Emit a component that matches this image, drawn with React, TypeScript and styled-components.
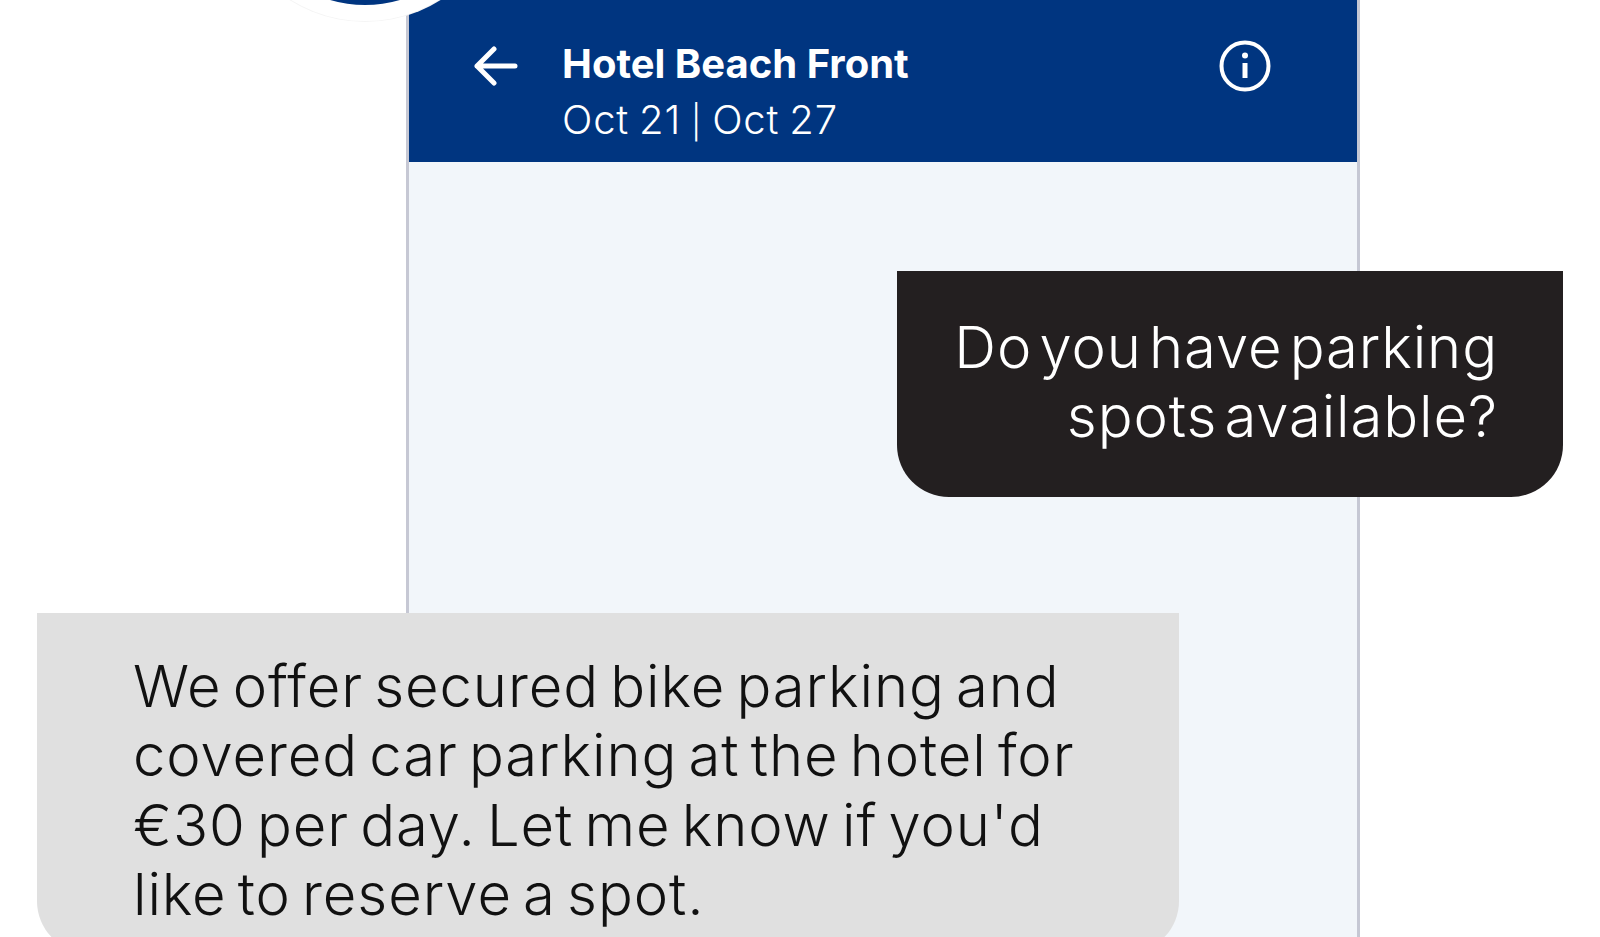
import React from 'react';
import styled, { createGlobalStyle } from 'styled-components';

const GlobalStyle = createGlobalStyle`
  html,
  body {
    margin: 0;
    height: 100%;
    background: #fff;
    overflow: hidden;
  }
`;

const Page = styled.div`
  width: 1600px;
  height: 937px;
  overflow: hidden;
  position: relative;
  padding-left: 406px;
  box-sizing: border-box;
  background: #fff;
  font-family: 'Inter', 'Liberation Sans', sans-serif;
`;

const Phone = styled.div`
  width: 954px;
  height: 937px;
  box-sizing: border-box;
  display: flex;
  flex-direction: column;
  background: #f2f6fa;
  border-left: 3px solid #c6c8d4;
  border-right: 3px solid #c6c8d4;
`;

const Header = styled.header`
  height: 162px;
  box-sizing: border-box;
  flex: none;
  display: flex;
  align-items: flex-start;
  background: #003580;
  color: #fff;
  padding: 43px 86px 0 65px;
`;

const BackButton = styled.div`
  width: 44px;
  height: 44px;
  margin-top: 1px;
  flex: none;
`;

const HeaderText = styled.div`
  flex: 1;
  margin-left: 44px;
  margin-top: -1px;
`;

const Title = styled.div`
  font-size: 40px;
  font-weight: 700;
  line-height: 44px;
`;

const Dates = styled.div`
  font-size: 40px;
  font-weight: 300;
  line-height: 67px;
  letter-spacing: 0.8px;
  word-spacing: -2px;
`;

const DateDivider = styled.span`
  font-size: 33px;
`;

const InfoButton = styled.div`
  width: 52px;
  height: 52px;
  flex: none;
  margin-top: -3px;
`;

const Thread = styled.div`
  flex: 1;
  display: flex;
  flex-direction: column;
`;

const Bubble = styled.div<{ $mine?: boolean }>`
  box-sizing: border-box;
  flex: none;
  font-size: 58px;
  font-weight: 350;
  line-height: 69.4px;
  letter-spacing: 0.9px;
  white-space: pre-line;
  border-radius: 0 0 52px 52px;
  ${({ $mine }) =>
    $mine
      ? `
    width: 666px;
    height: 226px;
    margin: 109px -206px 0 auto;
    padding: 42px 65px 0 0;
    word-spacing: -10px;
    background: #231f20;
    color: #fff;
    text-align: right;
  `
      : `
    width: 1142px;
    height: 340px;
    margin: 116px 0 0 -372px;
    padding: 39px 0 0 96px;
    word-spacing: -6px;
    background: #e0e0e0;
    color: #111;
  `}
`;

const Avatar = styled.div`
  position: absolute;
  left: 225px;
  top: -259px;
  width: 280px;
  height: 280px;
  box-sizing: border-box;
  border-radius: 50%;
  background: #003580;
  border: 16px solid #fff;
  box-shadow: 0 0 0 1px #f5f5f5;
`;

export default function App() {
  return (
    <>
      <GlobalStyle />
      <Page>
        <Phone>
          <Header>
            <BackButton>
              <svg width="44" height="44" viewBox="0 0 44 44" fill="none" stroke="#fff" strokeWidth="5" strokeLinecap="round" strokeLinejoin="round">
                <path d="M3 22h38M20 5 3 22l17 17" />
              </svg>
            </BackButton>
            <HeaderText>
              <Title>Hotel Beach Front</Title>
              <Dates>
                Oct 21 <DateDivider>|</DateDivider> Oct 27
              </Dates>
            </HeaderText>
            <InfoButton>
              <svg width="52" height="52" viewBox="0 0 52 52" fill="none" stroke="#fff">
                <circle cx="26" cy="26" r="23.5" strokeWidth="4" />
                <circle cx="26" cy="15.5" r="3" fill="#fff" stroke="none" />
                <path d="M26 23v15" strokeWidth="5" />
              </svg>
            </InfoButton>
          </Header>
          <Thread>
            <Bubble $mine>{'Do you have parking\nspots available?'}</Bubble>
            <Bubble>
              {"We offer secured bike parking and\ncovered car parking at the hotel for\n€30 per day. Let me know if you'd\nlike to reserve a spot."}
            </Bubble>
          </Thread>
        </Phone>
        <Avatar />
      </Page>
    </>
  );
}
